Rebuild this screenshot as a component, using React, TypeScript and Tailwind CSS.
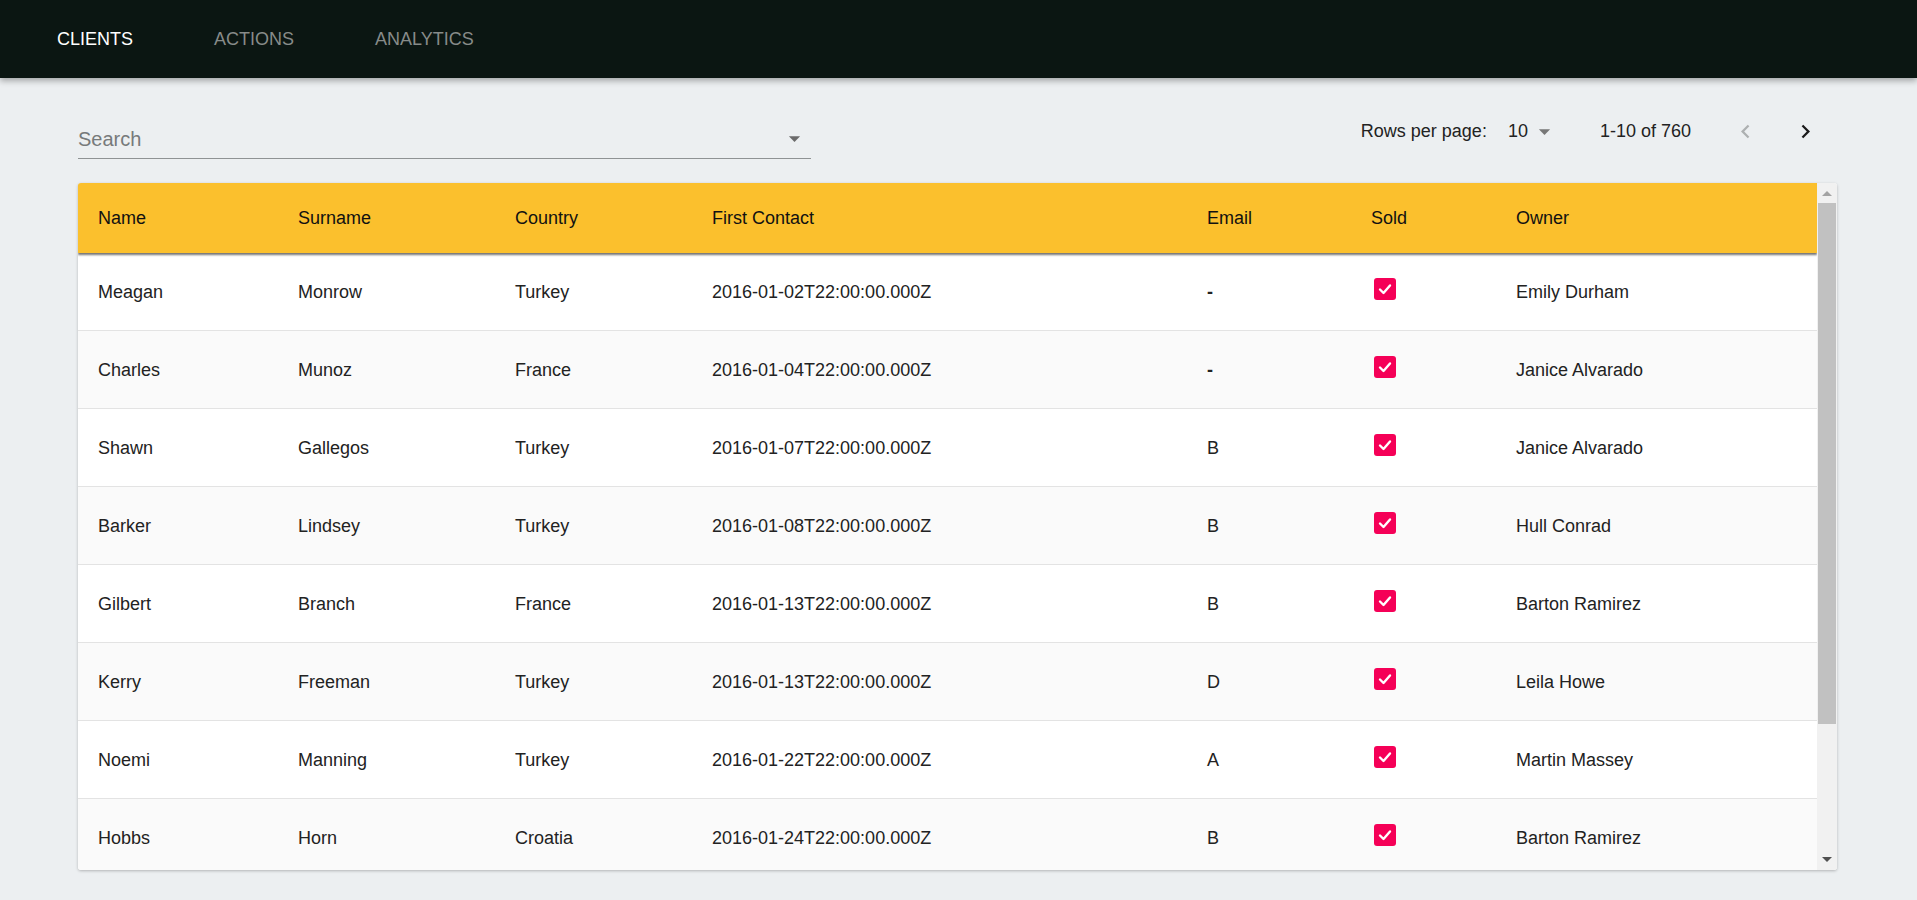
import React from 'react';

type Client = {
  name: string;
  surname: string;
  country: string;
  firstContact: string;
  email: string;
  sold: boolean;
  owner: string;
};

// only the rows that fit in the card are rendered
const CLIENTS: Client[] = [
  { name: 'Meagan', surname: 'Monrow', country: 'Turkey', firstContact: '2016-01-02T22:00:00.000Z', email: '-', sold: true, owner: 'Emily Durham' },
  { name: 'Charles', surname: 'Munoz', country: 'France', firstContact: '2016-01-04T22:00:00.000Z', email: '-', sold: true, owner: 'Janice Alvarado' },
  { name: 'Shawn', surname: 'Gallegos', country: 'Turkey', firstContact: '2016-01-07T22:00:00.000Z', email: 'B', sold: true, owner: 'Janice Alvarado' },
  { name: 'Barker', surname: 'Lindsey', country: 'Turkey', firstContact: '2016-01-08T22:00:00.000Z', email: 'B', sold: true, owner: 'Hull Conrad' },
  { name: 'Gilbert', surname: 'Branch', country: 'France', firstContact: '2016-01-13T22:00:00.000Z', email: 'B', sold: true, owner: 'Barton Ramirez' },
  { name: 'Kerry', surname: 'Freeman', country: 'Turkey', firstContact: '2016-01-13T22:00:00.000Z', email: 'D', sold: true, owner: 'Leila Howe' },
  { name: 'Noemi', surname: 'Manning', country: 'Turkey', firstContact: '2016-01-22T22:00:00.000Z', email: 'A', sold: true, owner: 'Martin Massey' },
  { name: 'Hobbs', surname: 'Horn', country: 'Croatia', firstContact: '2016-01-24T22:00:00.000Z', email: 'B', sold: true, owner: 'Barton Ramirez' },
];

const TABS = ['CLIENTS', 'ACTIONS', 'ANALYTICS'];
const HEADERS = ['Name', 'Surname', 'Country', 'First Contact', 'Email', 'Sold', 'Owner'];

// same column widths for head and body
const GRID = 'grid grid-cols-[200px_217px_197px_495px_164px_145px_1fr] items-center pl-5';

const DropArrow = ({ className = '' }: { className?: string }) => (
  <svg width="27" height="27" viewBox="0 0 24 24" className={className} fill="currentColor">
    <path d="M7 10l5 5 5-5z" />
  </svg>
);

const Chevron = ({ dir, className = '' }: { dir: 'left' | 'right'; className?: string }) => (
  <svg width="27" height="27" viewBox="0 0 24 24" className={className} fill="currentColor">
    {dir === 'right' ? (
      <path d="M8.59 16.59L13.17 12 8.59 7.41 10 6l6 6-6 6-1.41-1.41z" />
    ) : (
      <path d="M15.41 16.59L10.83 12l4.58-4.59L14 6l-6 6 6 6 1.41-1.41z" />
    )}
  </svg>
);

const CheckBox = () => (
  <div className="w-[22px] h-[22px] rounded-[3px] bg-[#f50057] flex items-center justify-center -mt-[5px] ml-[3px]">
    <svg width="16" height="16" viewBox="0 0 16 16" fill="none" stroke="white" strokeWidth="2.4" strokeLinecap="round" strokeLinejoin="round">
      <polyline points="3,8.5 6.5,12 13,4.5" />
    </svg>
  </div>
);

const App: React.FC = () => {
  return (
    <div className="min-h-screen bg-[#eceff1] font-['Liberation_Sans',Arial,sans-serif] text-[18px]">
      {/* Top nav */}
      <header className="h-[78px] bg-[#0b1612] shadow-[0_3px_6px_rgba(0,0,0,0.3)] flex items-center pl-[57px] gap-[81px]">
        {TABS.map((tab, i) => (
          <span key={tab} className={i === 0 ? 'text-white' : 'text-[#878b89]'}>
            {tab}
          </span>
        ))}
      </header>

      <main className="pl-[78px] pr-[80px]">
        {/* Toolbar */}
        <div className="flex items-start justify-between pt-[29px]">
          <div className="w-[733px] mt-[11px] h-[41px] border-b border-[#8f9394] flex items-center justify-between">
            <span className="text-[20px] text-[#777a7b] mt-[2px]">Search</span>
            <DropArrow className="text-[#6b6b6b] mr-[3px] mt-[1px]" />
          </div>

          <div className="flex items-center h-[48px] text-[#222]">
            <span>Rows per page:</span>
            <span className="ml-[21px]">10</span>
            <DropArrow className="text-[#777] ml-[3px]" />
            <span className="ml-[42px]">1-10 of 760</span>
            <button className="w-[48px] h-[48px] flex items-center justify-center ml-[30px] text-[#adb0b1]">
              <Chevron dir="left" />
            </button>
            <button className="w-[48px] h-[48px] flex items-center justify-center ml-[12px] mr-[8px] text-[#1a1a1a]">
              <Chevron dir="right" />
            </button>
          </div>
        </div>

        {/* Table card */}
        <div className="mt-[24px] h-[687px] bg-white rounded-[3px] shadow-[0_1px_3px_rgba(0,0,0,0.25)] flex overflow-hidden">
          <div className="flex-1 overflow-hidden">
            <div className={`${GRID} relative z-10 h-[70px] bg-[#fbc02d] text-[#111] shadow-[0_2px_2px_rgba(0,0,0,0.55)]`}>
              {HEADERS.map((h) => (
                <span key={h}>{h}</span>
              ))}
            </div>
            {CLIENTS.map((c, i) => (
              <div
                key={c.name}
                className={`${GRID} h-[78px] border-b border-[#e3e3e3] text-[#222] ${i % 2 === 1 ? 'bg-[#fafafa]' : 'bg-white'}`}
              >
                <span className="mt-[2px]">{c.name}</span>
                <span className="mt-[2px]">{c.surname}</span>
                <span className="mt-[2px]">{c.country}</span>
                <span className="mt-[2px]">{c.firstContact}</span>
                <span className={`mt-[2px] ${c.email === '-' ? 'font-bold' : ''}`}>{c.email}</span>
                <span>{c.sold && <CheckBox />}</span>
                <span className="mt-[2px]">{c.owner}</span>
              </div>
            ))}
          </div>

          {/* Scrollbar */}
          <div className="w-[20px] bg-[#f1f1f1] flex flex-col items-center">
            <div className="h-[20px] flex items-center justify-center">
              <div className="w-0 h-0 border-l-[5px] border-r-[5px] border-b-[5px] border-l-transparent border-r-transparent border-b-[#a3a3a3]" />
            </div>
            <div className="w-[18px] h-[521px] bg-[#c1c1c1]" />
            <div className="flex-1" />
            <div className="h-[22px] flex items-center justify-center">
              <div className="w-0 h-0 border-l-[5px] border-r-[5px] border-t-[5px] border-l-transparent border-r-transparent border-t-[#505050]" />
            </div>
          </div>
        </div>
      </main>
    </div>
  );
};

export default App;
